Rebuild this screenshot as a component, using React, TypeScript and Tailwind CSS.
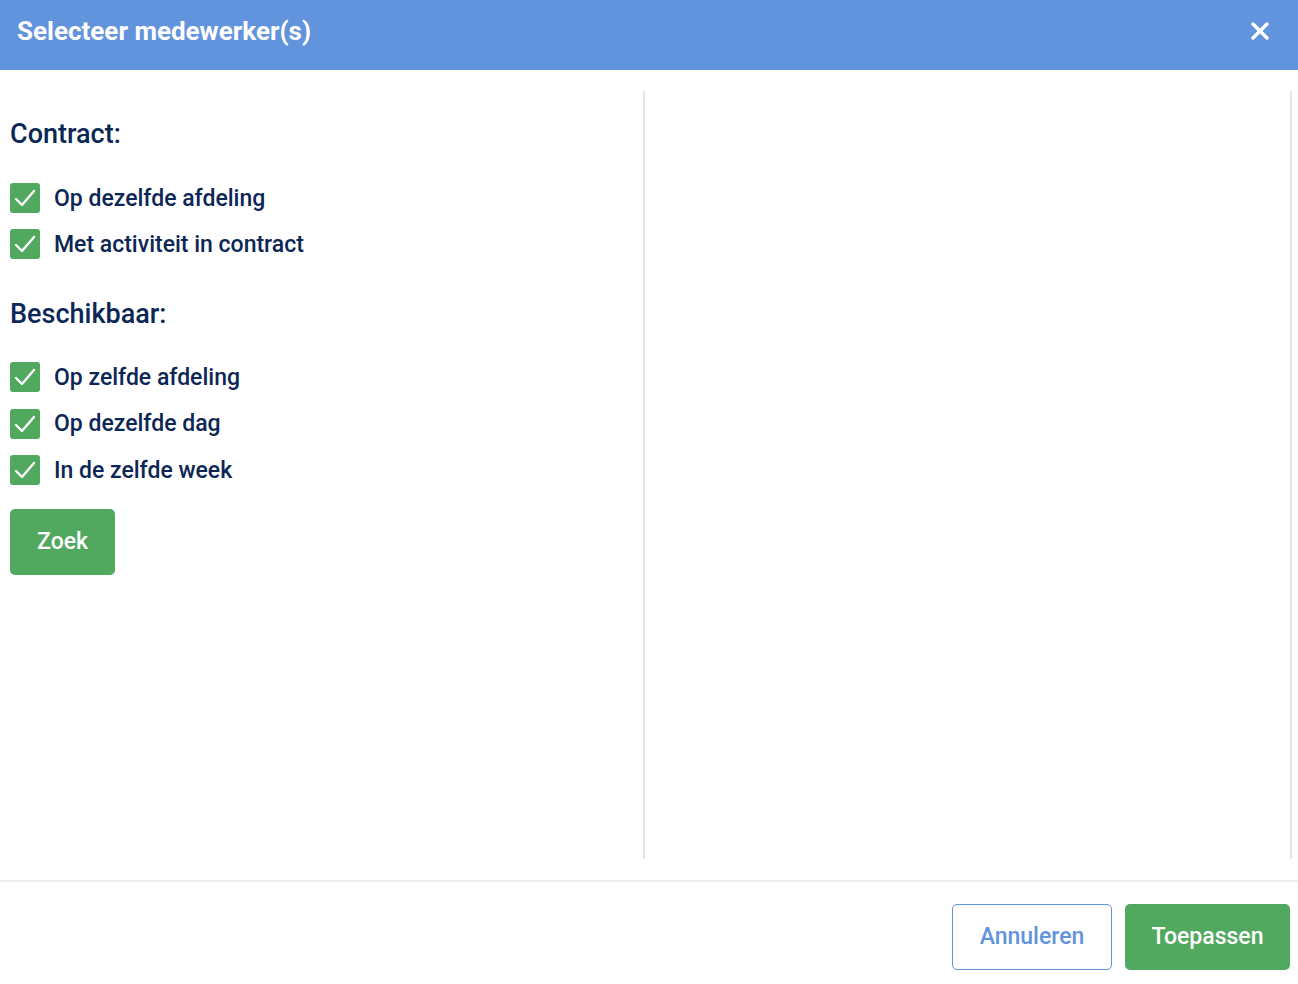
import { X } from "lucide-react"

const contractOptions = ["Op dezelfde afdeling", "Met activiteit in contract"]
const availableOptions = ["Op zelfde afdeling", "Op dezelfde dag", "In de zelfde week"]

function CheckRow({ label }: { label: string }) {
  return (
    <label className="flex items-center gap-[14px] h-[30px]">
      <span className="flex h-[30px] w-[30px] items-center justify-center rounded-[3px] bg-[#51a85f]">
        <svg width="24" height="24" viewBox="0 0 24 24" fill="none" stroke="white" strokeWidth="2.4" strokeLinecap="round" strokeLinejoin="round">
          <path d="M3 13l6 6L21 5" />
        </svg>
      </span>
      <span className="text-[23px] font-medium text-[#0c2755] pt-[2px]">{label}</span>
    </label>
  )
}

export default function App() {
  return (
    <div className="flex h-[984px] w-[1298px] flex-col bg-white font-['Roboto',sans-serif]">
      <header className="flex h-[70px] items-center justify-between bg-[#6293dd] pl-[17px] pr-[24px] pb-[8px]">
        <h1 className="text-[26px] font-bold text-white">Selecteer medewerker(s)</h1>
        <X className="h-[28px] w-[28px] text-white" strokeWidth={3} />
      </header>

      <div className="flex h-[810px] pt-[21px] pb-[21px]">
        <div className="w-[645px] pl-[10px] border-r-2 border-[#e6e6e6]">
          <h2 className="mt-[28px] text-[27px] font-medium text-[#0c2755] leading-[30px]">Contract:</h2>
          <div className="mt-[34px] flex flex-col gap-[16px]">
            {contractOptions.map((o) => (
              <CheckRow key={o} label={o} />
            ))}
          </div>
          <h2 className="mt-[40px] text-[27px] font-medium text-[#0c2755] leading-[30px]">Beschikbaar:</h2>
          <div className="mt-[33px] flex flex-col gap-[16.5px]">
            {availableOptions.map((o) => (
              <CheckRow key={o} label={o} />
            ))}
          </div>
          <button className="mt-[24px] h-[66px] w-[105px] rounded-[5px] bg-[#51a85f] text-[23px] font-medium text-white">
            Zoek
          </button>
        </div>
        <div className="w-[647px] border-r-2 border-[#e6e6e6]" />
      </div>

      <div className="border-t-2 border-[#ececec] flex justify-end gap-[13px] pt-[22px] pr-[8px]">
        <button className="h-[66px] w-[160px] rounded-[5px] border border-[#6293dd] bg-white text-[23px] font-medium text-[#6293dd]">
          Annuleren
        </button>
        <button className="h-[66px] w-[165px] rounded-[5px] bg-[#51a85f] text-[23px] font-medium text-white">
          Toepassen
        </button>
      </div>
    </div>
  )
}
